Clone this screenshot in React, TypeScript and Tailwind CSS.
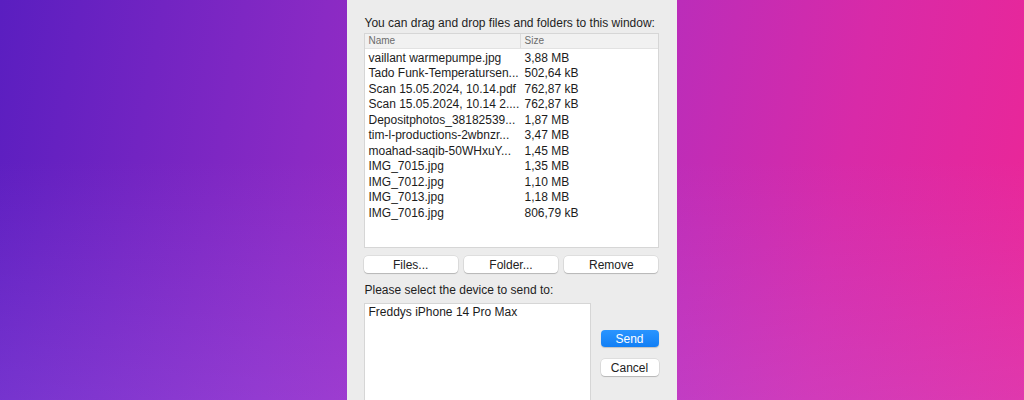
const files = [
  { name: "vaillant warmepumpe.jpg", size: "3,88 MB" },
  { name: "Tado Funk-Temperatursen...", size: "502,64 kB" },
  { name: "Scan 15.05.2024, 10.14.pdf", size: "762,87 kB" },
  { name: "Scan 15.05.2024, 10.14 2....", size: "762,87 kB" },
  { name: "Depositphotos_38182539...", size: "1,87 MB" },
  { name: "tim-l-productions-2wbnzr...", size: "3,47 MB" },
  { name: "moahad-saqib-50WHxuY...", size: "1,45 MB" },
  { name: "IMG_7015.jpg", size: "1,35 MB" },
  { name: "IMG_7012.jpg", size: "1,10 MB" },
  { name: "IMG_7013.jpg", size: "1,18 MB" },
  { name: "IMG_7016.jpg", size: "806,79 kB" },
];

const MacButton = ({ label, className = "" }: { label: string; className?: string }) => {
  return (
    <button
      className={`h-[17px] rounded-[4px] bg-white text-[12px] leading-none text-[#222] shadow-[0_0_0_0.5px_rgba(0,0,0,0.12),0_1px_1px_rgba(0,0,0,0.18)] ${className}`}
    >
      {label}
    </button>
  );
};

export default function App() {
  return (
    <div className="flex justify-center w-[1024px] h-[400px] overflow-hidden bg-[linear-gradient(100deg,#5a1ec0_0%,#8a2ac4_30%,#b02ec0_55%,#d82aa8_80%,#ec2696_100%)] font-['Liberation_Sans',Arial,sans-serif]">
      <div className="w-full h-full flex justify-center bg-[linear-gradient(to_bottom,rgba(255,255,255,0)_0%,rgba(255,255,255,0)_40%,rgba(180,120,255,0.22)_100%)]">
        <div className="w-[330px] h-full ml-[-1px] bg-[#ececec] pl-[17px] pr-[18px] pt-[16px]">
          <p className="text-[12px] leading-[15px] text-[#1e1e1e] pl-px whitespace-nowrap">
            You can drag and drop files and folders to this window:
          </p>

          <div className="mt-[2px] h-[215px] w-[295px] bg-white border border-[#d6d6d6] flex flex-col">
            <div className="flex h-[15px] bg-[#f1f1f1] border-b border-[#e2e2e2] text-[10px] leading-[14px] text-[#6c6c6c]">
              <div className="w-[156px] pl-[4px] border-r border-[#dcdcdc]">Name</div>
              <div className="pl-[4px]">Size</div>
            </div>
            <div className="flex flex-col pt-[1px]">
              {files.map((f) => (
                <div key={f.name} className="flex h-[15.5px] items-center text-[12px] text-[#1c1c1c]">
                  <div className="w-[156px] pl-[4px] whitespace-nowrap overflow-hidden">{f.name}</div>
                  <div className="pl-[4px] whitespace-nowrap">{f.size}</div>
                </div>
              ))}
            </div>
          </div>

          <div className="mt-[8px] flex gap-[6px] w-[295px]">
            <MacButton label="Files..." className="flex-1" />
            <MacButton label="Folder..." className="flex-1" />
            <MacButton label="Remove" className="flex-1" />
          </div>

          <p className="mt-[10px] text-[12px] leading-[15px] text-[#1e1e1e] pl-px">
            Please select the device to send to:
          </p>

          <div className="mt-[5px] flex w-[295px]">
            <div className="w-[227px] h-[120px] bg-white border border-[#d6d6d6] pl-[4px] pt-[1px] text-[12px] leading-[15px] text-[#1c1c1c]">
              Freddys iPhone 14 Pro Max
            </div>
            <div className="ml-auto pt-[27px] flex flex-col gap-[12px]">
              <button className="h-[17px] w-[58px] rounded-[4px] bg-[linear-gradient(to_bottom,#2a95ff,#127ff5)] text-[12px] leading-none text-white shadow-[0_1px_1px_rgba(0,0,0,0.18)]">
                Send
              </button>
              <MacButton label="Cancel" className="w-[58px]" />
            </div>
          </div>
        </div>
      </div>
    </div>
  );
}
